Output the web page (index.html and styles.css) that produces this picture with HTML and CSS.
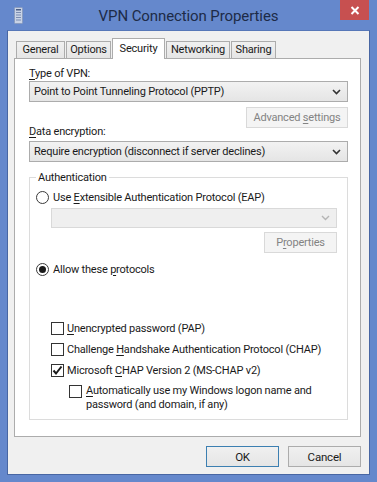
FILE: index.html
```html
<!DOCTYPE html>
<html lang="en">
<head>
  <meta charset="UTF-8">
  <meta name="viewport" content="width=device-width, initial-scale=1.0">
  <title>VPN Connection Properties</title>
  <link rel="stylesheet" href="styles.css">
</head>
<body>
  <div class="window">

    <div class="titlebar">
      <div class="app-icon">
        <svg width="9" height="17" viewBox="0 0 9 17">
          <rect x="0.5" y="0.5" width="8" height="16" rx="1" fill="#c9d3e6" stroke="#8a9cbf"/>
          <rect x="2" y="2" width="5" height="1.5" fill="#4c5f86"/>
          <rect x="2" y="5" width="5" height="1" fill="#7b8db2"/>
          <rect x="2" y="7.5" width="5" height="1" fill="#7b8db2"/>
          <rect x="2" y="10" width="5" height="1" fill="#7b8db2"/>
          <rect x="2" y="12.5" width="5" height="1" fill="#7b8db2"/>
        </svg>
      </div>
      <div class="title">VPN Connection Properties</div>
      <div class="close">
        <svg width="10" height="9" viewBox="0 0 10 9">
          <path d="M1.5 1 L8.5 8 M8.5 1 L1.5 8" stroke="#fff" stroke-width="2"/>
        </svg>
      </div>
    </div>

    <div class="client">
      <div class="tabs">
        <div class="tab tab-general">General</div>
        <div class="tab tab-options">Options</div>
        <div class="tab tab-security active">Security</div>
        <div class="tab tab-networking">Networking</div>
        <div class="tab tab-sharing">Sharing</div>
      </div>

      <div class="panel">
        <div class="label"><u>T</u>ype of VPN:</div>
        <div class="combo">
          <span>Point to Point Tunneling Protocol (PPTP)</span>
          <svg class="chevron" width="9" height="6" viewBox="0 0 9 6"><path d="M1 1 L4.5 4.5 L8 1" fill="none" stroke="#333" stroke-width="1.6"/></svg>
        </div>
        <div class="row-right">
          <div class="btn btn-disabled btn-advanced"><span>Advanced <u>s</u>ettings</span></div>
        </div>
        <div class="label label-tight"><u>D</u>ata encryption:</div>
        <div class="combo combo-second">
          <span>Require encryption (disconnect if server declines)</span>
          <svg class="chevron" width="9" height="6" viewBox="0 0 9 6"><path d="M1 1 L4.5 4.5 L8 1" fill="none" stroke="#333" stroke-width="1.6"/></svg>
        </div>

        <fieldset class="group">
          <legend>Authentication</legend>

          <div class="option first-option">
            <span class="radio"></span>
            <span>Use <u>E</u>xtensible Authentication Protocol (EAP)</span>
          </div>
          <div class="combo combo-disabled">
            <span></span>
            <svg class="chevron" width="9" height="6" viewBox="0 0 9 6"><path d="M1 1 L4.5 4.5 L8 1" fill="none" stroke="#b5b5b5" stroke-width="1.4"/></svg>
          </div>
          <div class="row-right">
            <div class="btn btn-disabled btn-properties"><span>P<u>r</u>operties</span></div>
          </div>

          <div class="option second-option">
            <span class="radio checked"></span>
            <span>Allow these <u>p</u>rotocols</span>
          </div>

          <div class="checks">
            <div class="check-row">
              <span class="checkbox"></span>
              <span><u>U</u>nencrypted password (PAP)</span>
            </div>
            <div class="check-row">
              <span class="checkbox"></span>
              <span>Challenge <u>H</u>andshake Authentication Protocol (CHAP)</span>
            </div>
            <div class="check-row">
              <span class="checkbox">
                <svg width="11" height="11" viewBox="0 0 11 11"><path d="M1.5 5.5 L4 8.5 L9.5 1.5" fill="none" stroke="#1a1a1a" stroke-width="2"/></svg>
              </span>
              <span>Microsoft <u>C</u>HAP Version 2 (MS-CHAP v2)</span>
            </div>
            <div class="check-row sub-row">
              <span class="checkbox"></span>
              <span><u>A</u>utomatically use my Windows logon name and<br>password (and domain, if any)</span>
            </div>
          </div>
        </fieldset>
      </div>

      <div class="actions">
        <div class="btn btn-default">OK</div>
        <div class="btn">Cancel</div>
      </div>
    </div>

  </div>
</body>
</html>
```

FILE: styles.css
```css
body {
  margin: 0;
  padding: 0;
  background-color: #6588cc;
  font-family: 'Roboto', 'Liberation Sans', sans-serif;
  font-size: 11px;
  letter-spacing: -0.2px;
  color: #1a1a1a;
}

u {
  text-decoration-thickness: 1px;
  text-underline-offset: 2px;
}

.window {
  width: 377px;
  height: 482px;
  box-sizing: border-box;
  background-color: #6588cc;
  display: flex;
  flex-direction: column;
}


/* title bar */

.titlebar {
  flex-shrink: 0;
  height: 30px;
  padding: 0 8px;
  display: grid;
  grid-template-columns: 1fr auto 1fr;
  align-items: center;
}

.app-icon {
  margin-left: 6px;
  display: flex;
  align-items: center;
  padding-top: 1px;
}

.title {
  font-size: 15px;
  letter-spacing: -0.1px;
  color: #1d2b47;
  padding-top: 1px;
}

.close {
  justify-self: end;
  align-self: start;
  width: 29px;
  height: 20px;
  background-color: #c75050;
  display: flex;
  align-items: center;
  justify-content: center;
}


/* client area */

.client {
  flex: 1;
  min-height: 0;
  margin: 0 7px 7px;
  border: 1px solid #4866a3;
  border-top-color: #5677b8;
  background-color: #f0f0f0;
  padding: 7px 8px 0 6px;
  display: flex;
  flex-direction: column;
}

.tabs {
  flex-shrink: 0;
  display: flex;
  align-items: flex-end;
  gap: 1px;
  padding-left: 2px;
  margin-bottom: -1px;
  position: relative;
  z-index: 1;
}

.tab {
  box-sizing: border-box;
  height: 17px;
  line-height: 16px;
  text-align: center;
  margin-bottom: 1px;
  border: 1px solid #acacac;
  border-bottom: none;
  background: linear-gradient(#f0f0f0, #e5e5e5);
}

.tab.active {
  height: 21px;
  line-height: 19px;
  margin: 0;
  background: #fff;
}

.tab-general { width: 49px; }
.tab-options { width: 45px; }
.tab-security { width: 53px; }
.tab-networking { width: 64px; }
.tab-sharing { width: 45px; }

.panel {
  flex: 1;
  min-height: 0;
  overflow: hidden;
  border: 1px solid #acacac;
  background-color: #fff;
  padding: 7px 12px 0 14px;
}

.label {
  line-height: 15px;
}

.label-tight {
  margin-top: -4px;
}


/* combo boxes and buttons */

.combo {
  height: 19px;
  border: 1px solid #acacac;
  background: linear-gradient(#f2f2f2, #e5e5e5);
  display: flex;
  align-items: center;
  justify-content: space-between;
  padding: 0 6px 0 4px;
}

.combo-second {
  margin-top: 2px;
}

.combo-disabled {
  margin: 3px 0 0 15px;
  height: 18px;
  border-color: #d9d9d9;
  background: #efefef;
}

.row-right {
  display: flex;
  justify-content: flex-end;
}

.btn {
  height: 19px;
  border: 1px solid #acacac;
  background: linear-gradient(#f0f0f0, #e5e5e5);
  display: flex;
  align-items: center;
  justify-content: center;
}

.btn-disabled {
  border-color: #d9d9d9;
  background: #f4f4f4;
  color: #838383;
}

.btn-advanced {
  margin-top: 5px;
  width: 100px;
}

.btn-properties {
  margin-top: 4px;
  width: 71px;
}

.btn-default {
  border-color: #3c7fb1;
}

.actions {
  flex-shrink: 0;
  display: flex;
  justify-content: flex-end;
  gap: 9px;
  padding: 9px 0 7px;
}

.actions .btn {
  width: 71px;
  font-size: 11.5px;
}


/* authentication group */

.group {
  margin: 8px 0 0 0;
  padding: 0 10px 7px 6px;
  border: 1px solid #dcdcdc;
  min-width: 0;
}

.group legend {
  margin-left: 0;
  padding: 0 2px;
  line-height: 15px;
}

.option {
  display: flex;
  align-items: center;
  height: 16px;
}

.first-option {
  margin-top: 4px;
}

.second-option {
  margin-top: 8px;
}

.radio {
  width: 11px;
  height: 11px;
  border: 1px solid #3a3a3a;
  border-radius: 50%;
  background-color: #fff;
  margin-right: 4px;
  display: flex;
  align-items: center;
  justify-content: center;
}

.radio.checked::after {
  content: '';
  width: 7px;
  height: 7px;
  border-radius: 50%;
  background-color: #1a1a1a;
}

.checks {
  margin: 43px 0 0 15px;
  display: flex;
  flex-direction: column;
  gap: 5px;
}

.check-row {
  display: flex;
  align-items: center;
  min-height: 16px;
  white-space: nowrap;
}

.checkbox {
  width: 11px;
  height: 11px;
  border: 1px solid #333;
  background-color: #fff;
  margin-right: 3px;
  flex-shrink: 0;
  display: flex;
  align-items: center;
  justify-content: center;
}

.sub-row {
  margin: 1px 0 0 18px;
  align-items: flex-start;
  line-height: 14px;
}

.sub-row .checkbox {
  margin-top: 1px;
  margin-right: 4px;
}
```
